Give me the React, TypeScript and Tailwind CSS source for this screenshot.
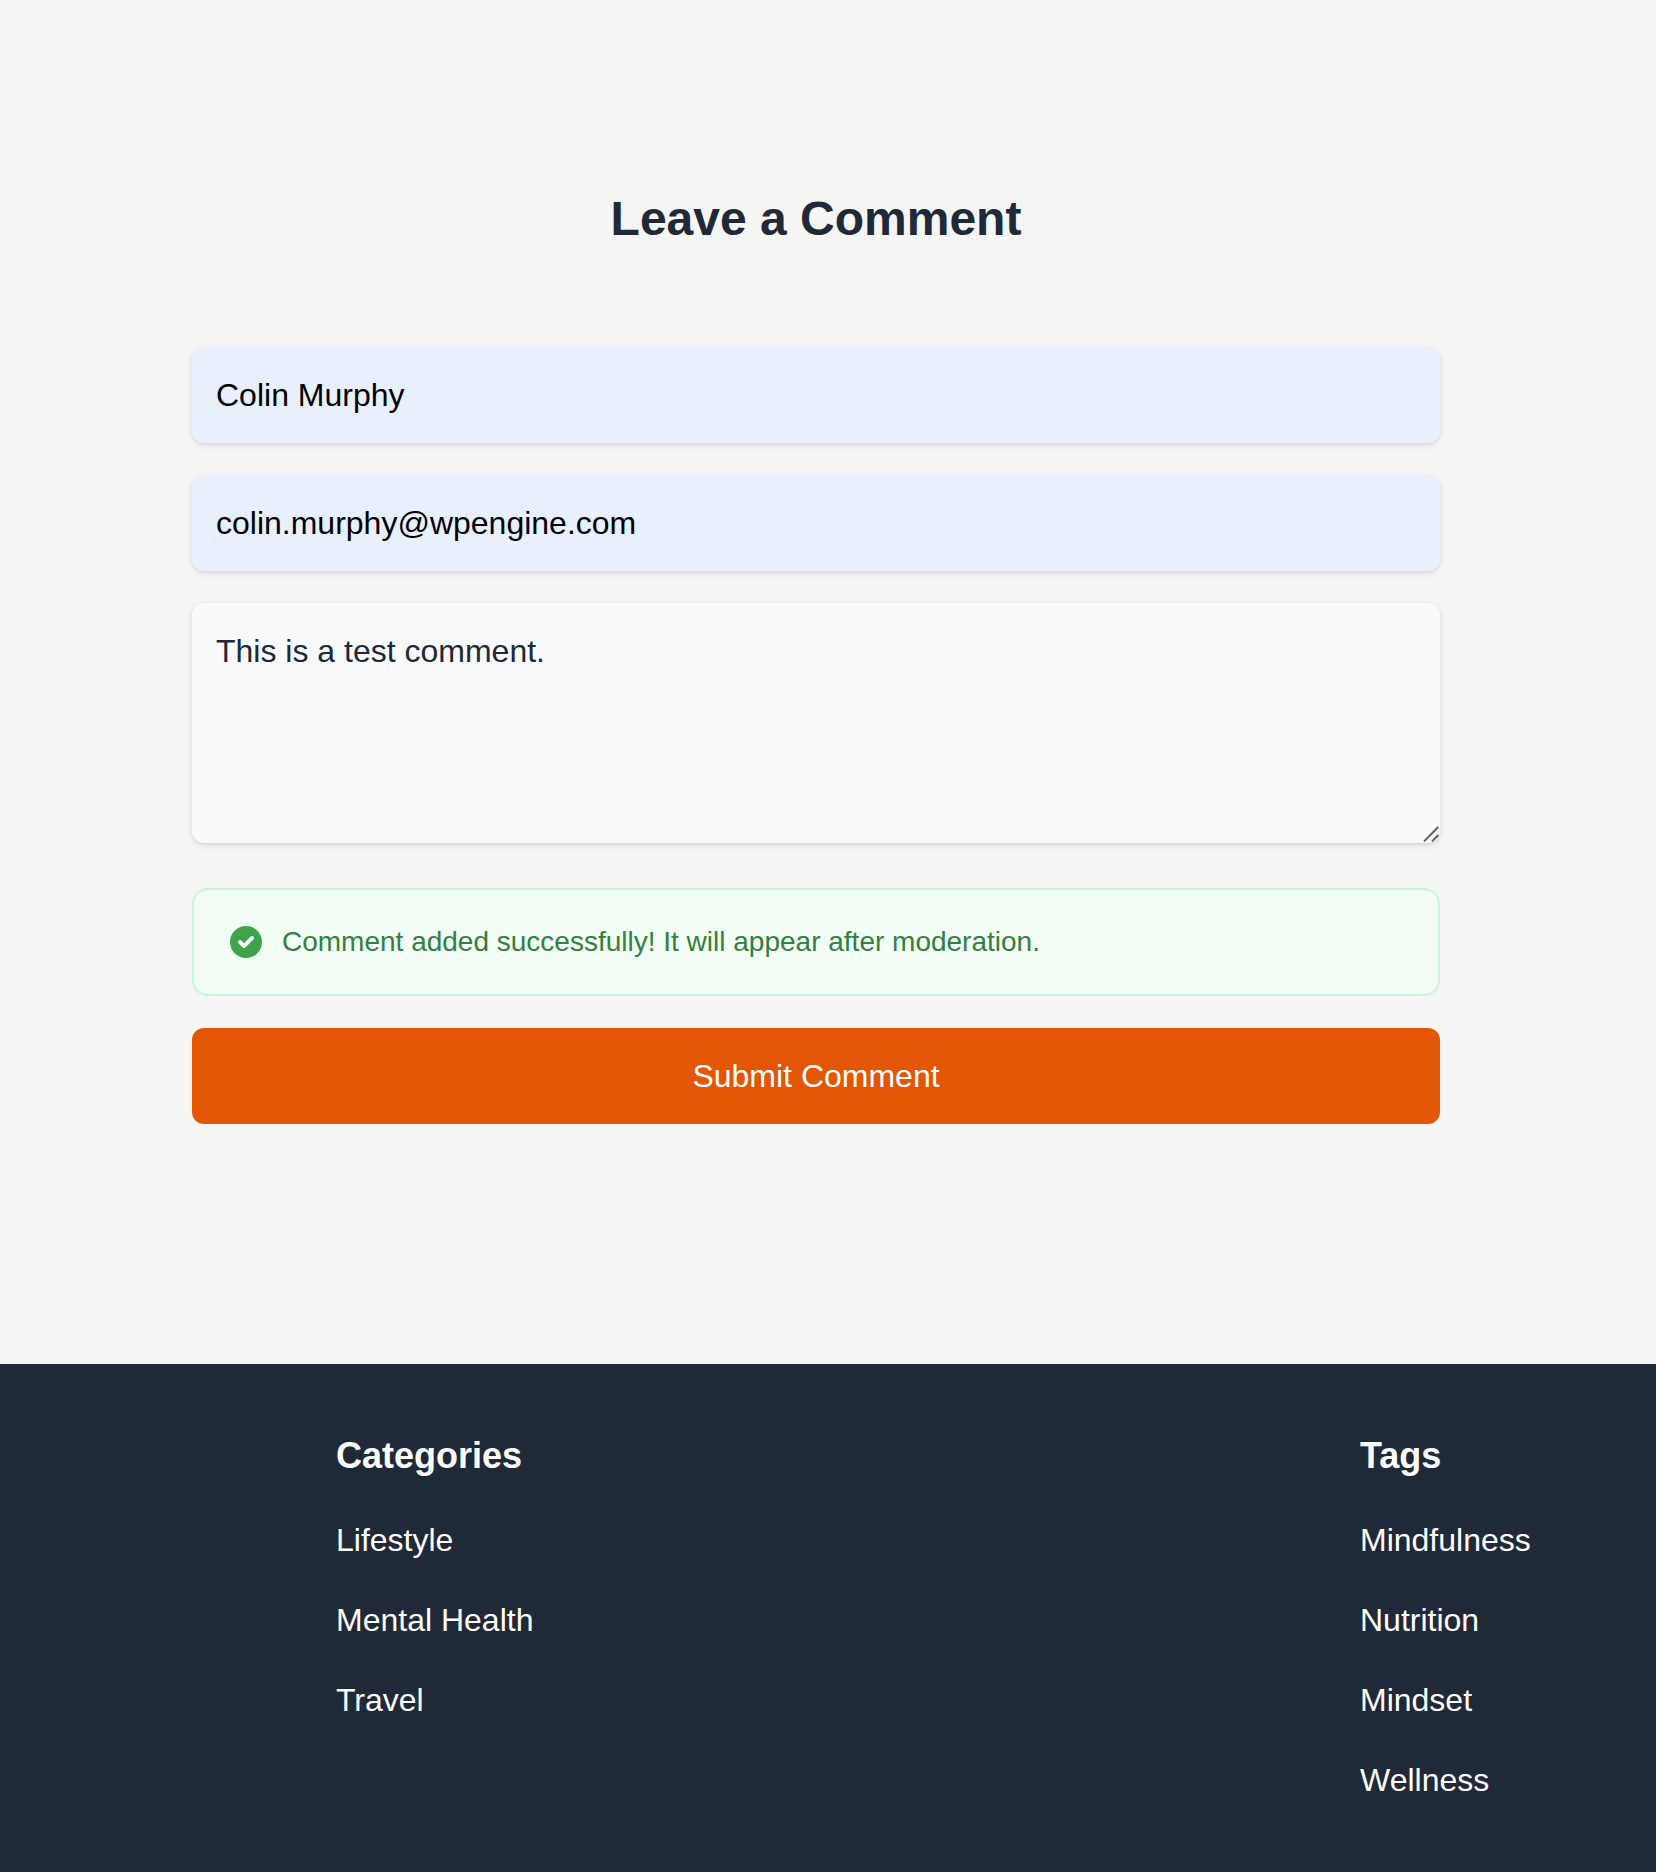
import React from "react";

const footerColumns = [
  { title: "Categories", links: ["Lifestyle", "Mental Health", "Travel"] },
  { title: "Tags", links: ["Mindfulness", "Nutrition", "Mindset", "Wellness"] },
];

const field =
  "block w-full rounded-[12px] px-6 py-6 text-[32px] leading-[48px] outline-none shadow-[0_2px_6px_rgba(0,0,0,0.1),0_2px_4px_-2px_rgba(0,0,0,0.1)]";

function SuccessIcon() {
  return (
    <svg className="size-10 shrink-0 text-[#40a24c]" viewBox="0 0 20 20" fill="currentColor">
      <path
        fillRule="evenodd"
        clipRule="evenodd"
        d="M10 18a8 8 0 100-16 8 8 0 000 16zm3.707-9.293a1 1 0 00-1.414-1.414L9 10.586 7.707 9.293a1 1 0 00-1.414 1.414l2 2a1 1 0 001.414 0l4-4z"
      />
    </svg>
  );
}

function ResizeGrip() {
  return (
    <svg
      className="pointer-events-none absolute right-0 bottom-0 size-5"
      viewBox="0 0 20 20"
      fill="none"
      stroke="#5c5d5e"
      strokeWidth="1.9"
    >
      <path d="M4 18.3 18.3 4M12 18.3 18.3 12" />
    </svg>
  );
}

export default function App() {
  return (
    <div className="flex h-[1872px] w-full flex-col overflow-hidden bg-[#f5f5f3] font-['Liberation_Sans',Arial,sans-serif]">
      <main className="flex h-[1364px] shrink-0 flex-col pr-[216px] pl-48 pt-[187px]">
        <h2 className="text-center text-[48px] leading-[64px] font-bold text-[#202938]">Leave a Comment</h2>
        <form className="mt-24 flex flex-col" onSubmit={(e) => e.preventDefault()}>
          <div className="flex flex-col gap-8">
            <input className={`${field} bg-[#e8effd] text-black`} type="text" defaultValue="Colin Murphy" />
            <input
              className={`${field} bg-[#e8effd] text-black`}
              type="email"
              defaultValue="colin.murphy@wpengine.com"
            />
            <div className="relative">
              <textarea
                className={`${field} h-60 resize-none bg-[#f9fafc] text-[#202938]`}
                defaultValue="This is a test comment."
              />
              <ResizeGrip />
            </div>
          </div>
          <div className="mt-[45px] flex items-center gap-4 rounded-2xl border-2 border-[#c6f6d5] bg-[#f2fdf5] p-8">
            <SuccessIcon />
            <p className="text-[28px] leading-[40px] text-[#34803f]">
              Comment added successfully! It will appear after moderation.
            </p>
          </div>
          <button
            type="submit"
            className="mt-8 h-24 w-full rounded-[12px] bg-[#e25606] text-[32px] leading-[48px] text-white"
          >
            Submit Comment
          </button>
        </form>
      </main>
      <footer className="grid flex-1 grid-cols-[1024px_1fr] bg-[#202938] pt-16 pl-[336px] text-white">
        {footerColumns.map((column) => (
          <section key={column.title}>
            <h3 className="text-[36px] leading-[56px] font-bold">{column.title}</h3>
            <ul className="mt-8 flex flex-col gap-8">
              {column.links.map((link) => (
                <li key={link} className="text-[32px] leading-[48px]">
                  {link}
                </li>
              ))}
            </ul>
          </section>
        ))}
      </footer>
    </div>
  );
}
